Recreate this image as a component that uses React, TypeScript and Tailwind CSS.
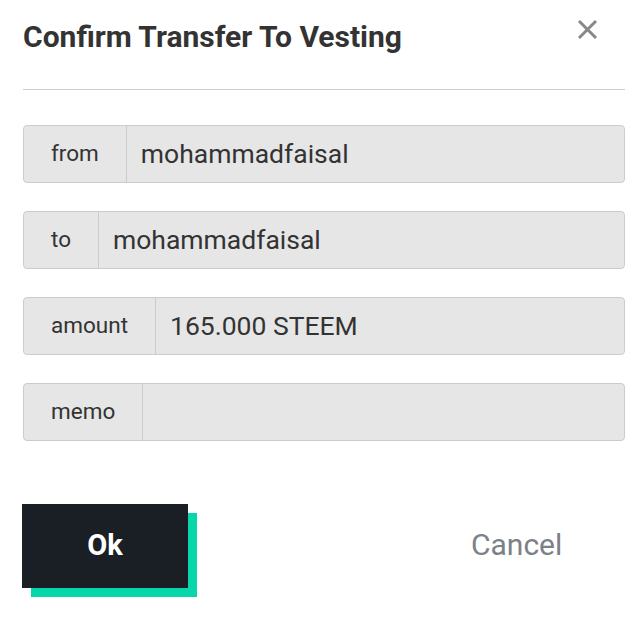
import React from "react";

const rows: { label: string; value: string }[] = [
  { label: "from", value: "mohammadfaisal" },
  { label: "to", value: "mohammadfaisal" },
  { label: "amount", value: "165.000 STEEM" },
  { label: "memo", value: "" },
];

export default function App() {
  return (
    <div
      className="w-[640px] h-[622px] bg-white overflow-hidden"
      style={{ fontFamily: "Roboto, 'Liberation Sans', sans-serif" }}
    >
      <div className="pl-[23px] pr-[15px]">
        <div className="flex items-start justify-between h-[90px] border-b border-[#cfcfcf]">
          <h1 className="mt-[19px] text-[30px] leading-[36px] font-bold text-[#333]">
            Confirm Transfer To Vesting
          </h1>
          <button className="mt-[18px] mr-[27px] w-[22px] h-[22px] flex items-center justify-center">
            <svg width="21" height="21" viewBox="0 0 21 21">
              <path d="M2 2 L19 19 M19 2 L2 19" stroke="#888" strokeWidth="3" />
            </svg>
          </button>
        </div>

        <div className="mt-[35px] flex flex-col gap-[28px]">
          {rows.map((r) => (
            <div
              key={r.label}
              className="flex h-[58px] border border-[#cccccc] rounded-[4px] bg-[#e6e6e6]"
            >
              <div className="flex items-center px-[27px] border-r border-[#cccccc] text-[22.5px] text-[#333]">
                {r.label}
              </div>
              <div className="flex-1 flex items-center pl-[14px] text-[26.5px] text-[#333]">
                {r.value}
              </div>
            </div>
          ))}
        </div>

        <div className="mt-[63px] flex items-center">
          <div className="relative w-[166px] h-[84px] ml-[-1px]">
            <div className="absolute left-[9px] top-[9px] w-[166px] h-[84px] bg-[#06d6a9]" />
            <button className="relative w-[166px] h-[84px] bg-[#1a1f26] text-white text-[29px] font-bold">
              Ok
            </button>
          </div>
          <div className="ml-[283px] mb-[4px] text-[30px] text-[#7b8187]">Cancel</div>
        </div>
      </div>
    </div>
  );
}
